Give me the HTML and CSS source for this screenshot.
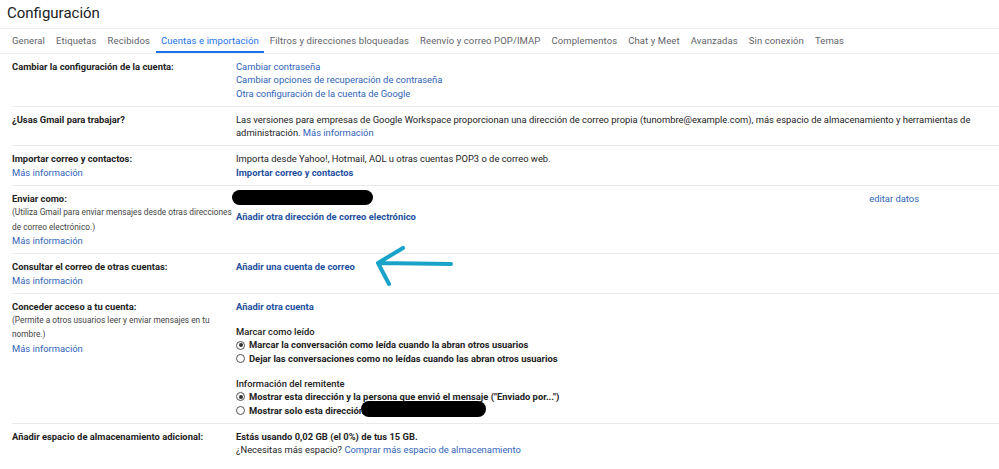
FILE: index.html
```html
<!DOCTYPE html>
<html lang="es">
<head>
<meta charset="utf-8">
<link rel="stylesheet" href="styles.css">
</head>
<body>
<div class="page">
  <header class="header">
    <h1 class="title">Configuración</h1>
  </header>
  <nav class="tabs">
    <span class="tab">General</span>
    <span class="tab">Etiquetas</span>
    <span class="tab">Recibidos</span>
    <span class="tab active">Cuentas e importación</span>
    <span class="tab">Filtros y direcciones bloqueadas</span>
    <span class="tab">Reenvío y correo POP/IMAP</span>
    <span class="tab">Complementos</span>
    <span class="tab">Chat y Meet</span>
    <span class="tab">Avanzadas</span>
    <span class="tab">Sin conexión</span>
    <span class="tab">Temas</span>
  </nav>
  <div class="settings">
    <div class="row">
      <div class="label"><b>Cambiar la configuración de la cuenta:</b></div>
      <div class="value">
        <a class="link">Cambiar contraseña</a><br>
        <a class="link">Cambiar opciones de recuperación de contraseña</a><br>
        <a class="link">Otra configuración de la cuenta de Google</a>
      </div>
    </div>
    <div class="row">
      <div class="label"><b>¿Usas Gmail para trabajar?</b></div>
      <div class="value">Las versiones para empresas de Google Workspace proporcionan una dirección de correo propia (tunombre@example.com), más espacio de almacenamiento y herramientas de administración. <a class="link">Más información</a></div>
    </div>
    <div class="row">
      <div class="label"><b>Importar correo y contactos:</b><br><a class="link">Más información</a></div>
      <div class="value">Importa desde Yahoo!, Hotmail, AOL u otras cuentas POP3 o de correo web.<br><a class="link strong">Importar correo y contactos</a></div>
    </div>
    <div class="row">
      <div class="label"><b>Enviar como:</b><br><span class="note">(Utiliza Gmail para enviar mensajes desde otras direcciones de correo electrónico.)</span><br><a class="link">Más información</a></div>
      <div class="value sendas">
        <div class="sendas-main">
          <span class="redact redact-1"></span>
          <a class="link strong add-address">Añadir otra dirección de correo electrónico</a>
        </div>
        <a class="link edit">editar datos</a>
      </div>
    </div>
    <div class="row">
      <div class="label"><b>Consultar el correo de otras cuentas:</b><br><a class="link">Más información</a></div>
      <div class="value"><a class="link strong">Añadir una cuenta de correo</a></div>
    </div>
    <div class="row">
      <div class="label"><b>Conceder acceso a tu cuenta:</b><br><span class="note">(Permite a otros usuarios leer y enviar mensajes en tu nombre.)</span><br><a class="link">Más información</a></div>
      <div class="value">
        <a class="link strong">Añadir otra cuenta</a>
        <div class="group">
          <div class="group-title">Marcar como leído</div>
          <label class="radio"><span class="dot checked"></span>Marcar la conversación como leída cuando la abran otros usuarios</label>
          <label class="radio"><span class="dot"></span>Dejar las conversaciones como no leídas cuando las abran otros usuarios</label>
        </div>
        <div class="group">
          <div class="group-title">Información del remitente</div>
          <label class="radio"><span class="dot checked"></span>Mostrar esta dirección y la persona que envió el mensaje ("Enviado por...")</label>
          <label class="radio"><span class="dot"></span>Mostrar solo esta dirección<span class="redact redact-2"></span></label>
        </div>
      </div>
    </div>
    <div class="row last">
      <div class="label"><b>Añadir espacio de almacenamiento adicional:</b></div>
      <div class="value"><b>Estás usando 0,02 GB (el 0%) de tus 15 GB.</b><br>¿Necesitas más espacio? <a class="link">Comprar más espacio de almacenamiento</a></div>
    </div>
  </div>
  <svg class="arrow" width="90" height="46" viewBox="0 0 90 46">
    <path d="M79 18 L6 17 M6 17 L31 2 M6 17 L17 38" fill="none" stroke="#1aa3c9" stroke-width="4" stroke-linecap="round" stroke-linejoin="round"/>
  </svg>
</div>
</body>
</html>
```
FILE: styles.css
```css
* { box-sizing: border-box; }
html, body { margin: 0; padding: 0; background: #fff; }
body {
  font-family: Roboto, "Liberation Sans", Arial, sans-serif;
  font-size: 9.4px;
  line-height: 13.3px;
  color: #222;
}
.page { position: relative; width: 999px; height: 469px; overflow: hidden; }

.header { height: 29px; border-bottom: 1px solid #eceeef; padding-left: 7px; }
.title {
  margin: 0;
  font-weight: 400;
  font-size: 15px;
  line-height: 26px;
  color: #202124;
}

.tabs {
  display: flex;
  gap: 1px;
  padding-left: 7px;
  height: 25px;
  border-bottom: 1px solid #eceeef;
}
.tab {
  padding: 1px 5px 0;
  font-size: 9.5px;
  letter-spacing: 0.1px;
  line-height: 21px;
  color: #5f6368;
  border-bottom: 2px solid transparent;
  white-space: nowrap;
}
.tab.active { color: #1a73e8; border-bottom-color: #1a73e8; }

.settings { padding-left: 12px; }
.row {
  display: flex;
  padding: 6px 0;
  border-bottom: 1px solid #e8eaed;
}
.row.last { border-bottom: none; }
.label { width: 224px; flex: none; }
.label b { font-weight: 700; }
.value { flex: 1; padding-right: 16px; }
.note { font-size: 8.3px; color: #444; }

.link { color: #2f63b8; text-decoration: none; }
.link.strong { color: #1d4f9e; font-weight: 700; }

.sendas { display: flex; align-items: flex-start; padding-right: 80px; }
.sendas-main { display: flex; flex-direction: column; align-items: flex-start; }
.edit { margin-left: auto; }
.redact { display: inline-block; background: #000; border-radius: 8px; }
.redact-1 { width: 141px; height: 15px; margin: -2px 0 5px -4px; }
.redact-2 { width: 125px; height: 16px; vertical-align: middle; margin-left: -3px; margin-top: -3px; }

.group { margin-top: 12px; }
.group-title { font-weight: 500; }
.radio { display: flex; align-items: center; font-weight: 700; color: #222; }
.dot {
  width: 9px; height: 9px;
  border: 1px solid #555;
  border-radius: 50%;
  margin-right: 4px;
  flex: none;
  position: relative;
}
.dot.checked::after {
  content: "";
  position: absolute;
  left: 1.5px; top: 1.5px;
  width: 4px; height: 4px;
  border-radius: 50%;
  background: #333;
}

.arrow { position: absolute; left: 372px; top: 246px; }
```
